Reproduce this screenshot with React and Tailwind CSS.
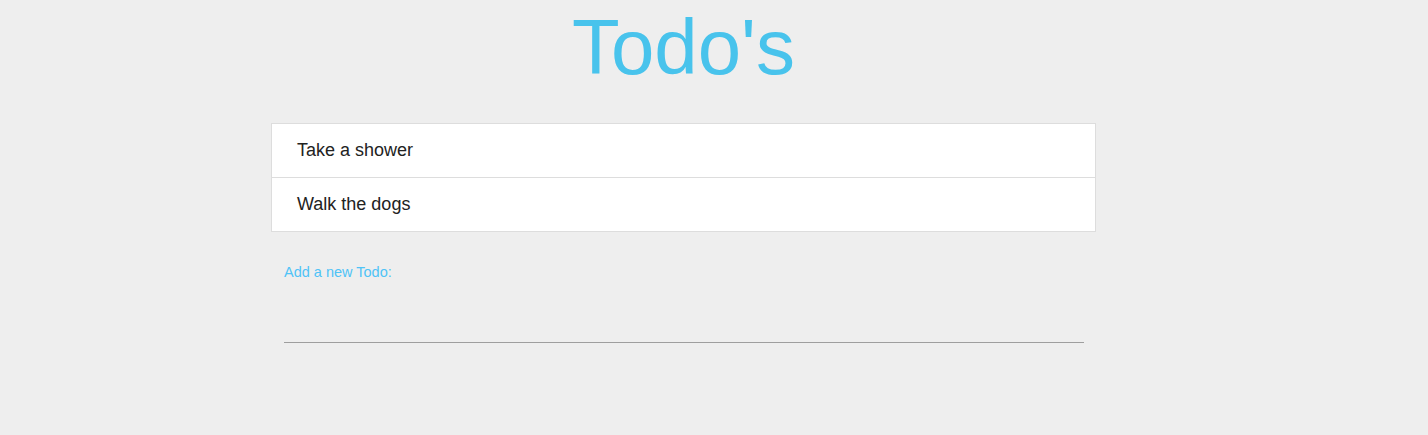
import React from 'react';

const todos = ['Take a shower', 'Walk the dogs'];

const App = () => {
  return (
    <div className="min-h-screen bg-[#eeeeee] font-['Liberation_Sans',Arial,sans-serif]">
      <div className="w-[825px] ml-[271px]">
        <h1 className="text-center text-[78px] leading-none pt-[8px] text-[#48c3ec]">
          Todo's
        </h1>

        <ul className="mt-[37px] bg-white border border-[#dddddd]">
          {todos.map((todo, i) => (
            <li
              key={todo}
              className={`flex items-center pl-[25px] text-[18px] text-[#222222] ${
                i > 0 ? 'h-[54px] border-t border-[#dddddd]' : 'h-[53px]'
              }`}
            >
              {todo}
            </li>
          ))}
        </ul>

        <div className="mt-[32px] px-[13px] w-[813px]">
          <label className="block text-[14.5px] leading-4 text-[#4fc3f7]">
            Add a new Todo:
          </label>
          <input
            type="text"
            className="block w-[800px] h-[49px] mt-[14px] bg-transparent border-b border-[#9e9e9e] outline-none text-[16px]"
          />
        </div>
      </div>
    </div>
  );
};

export default App;
